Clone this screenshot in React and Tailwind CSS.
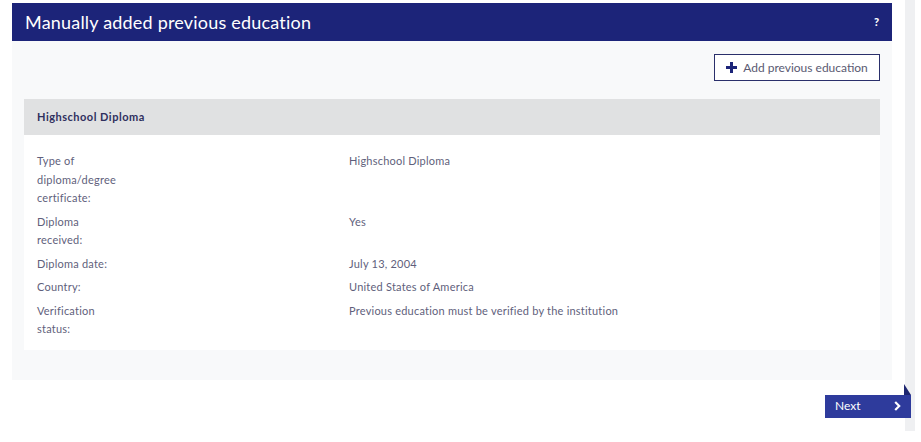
import React from "react";

const rows = [
  { label: ["Type of", "diploma/degree", "certificate:"], value: "Highschool Diploma" },
  { label: ["Diploma", "received:"], value: "Yes" },
  { label: ["Diploma date:"], value: "July 13, 2004" },
  { label: ["Country:"], value: "United States of America" },
  { label: ["Verification", "status:"], value: "Previous education must be verified by the institution" },
];

export default function App() {
  return (
    <div className="w-[921px] h-[442px] bg-white flex font-['Lato',sans-serif] overflow-hidden">
      <div className="w-[905px] pl-[12px] pt-[3px] flex flex-col">
        <div className="w-[880px] flex flex-col">
          <div className="h-[38px] bg-[#1c2479] flex items-center justify-between pl-[13px] pr-[13px]">
            <span className="text-white text-[18px] tracking-[0.2px]">Manually added previous education</span>
            <span className="text-white text-[11px] font-black">?</span>
          </div>
          <div className="bg-[#f8f9fa] pt-[13px] pb-[30px] px-[12px] flex flex-col">
            <div className="flex justify-end">
              <button className="h-[27px] w-[166px] bg-white border border-[#2a2f6b] flex items-center justify-center gap-[6px] text-[12px] text-[#5a5a72]">
                <svg width="11" height="11" viewBox="0 0 11 11">
                  <rect x="4" y="0" width="3" height="11" fill="#1c2479" />
                  <rect x="0" y="4" width="11" height="3" fill="#1c2479" />
                </svg>
                <span>Add previous education</span>
              </button>
            </div>
            <div className="mt-[18px] bg-white flex flex-col">
              <div className="h-[36px] bg-[#e0e1e2] flex items-center pl-[13px]">
                <span className="text-[11px] font-bold tracking-[0.5px] text-[#2f2f5e]">Highschool Diploma</span>
              </div>
              <div className="pt-[17px] pb-[11px] pl-[13px] flex flex-col gap-[5px] text-[11px] leading-[18.5px] tracking-[0.22px] text-[#5f5f7c]">
                {rows.map((r, i) => (
                  <div key={i} className="grid grid-cols-[312px_1fr]">
                    <div className="flex flex-col">
                      {r.label.map((l, j) => (
                        <span key={j}>{l}</span>
                      ))}
                    </div>
                    <div>{r.value}</div>
                  </div>
                ))}
              </div>
            </div>
          </div>
        </div>
        <div className="flex justify-end mt-[15px] mr-[-6px]">
          <div className="relative z-10">
            <svg className="absolute right-0 top-[-11px]" width="7" height="11" viewBox="0 0 7 11">
              <polygon points="0,0 7,11 0,11" fill="#1e2670" />
            </svg>
            <button className="w-[86px] h-[23px] bg-[#2e3b9c] flex items-center justify-between pl-[10px] pr-[10px] text-white text-[12px]">
              <span>Next</span>
              <svg width="7" height="10" viewBox="0 0 7 10">
                <path d="M1.2 1 L5.2 5 L1.2 9" stroke="white" strokeWidth="2.2" fill="none" />
              </svg>
            </button>
          </div>
        </div>
      </div>
      <div className="w-[10px] h-[431px] bg-[#eff0f2]" />
    </div>
  );
}
